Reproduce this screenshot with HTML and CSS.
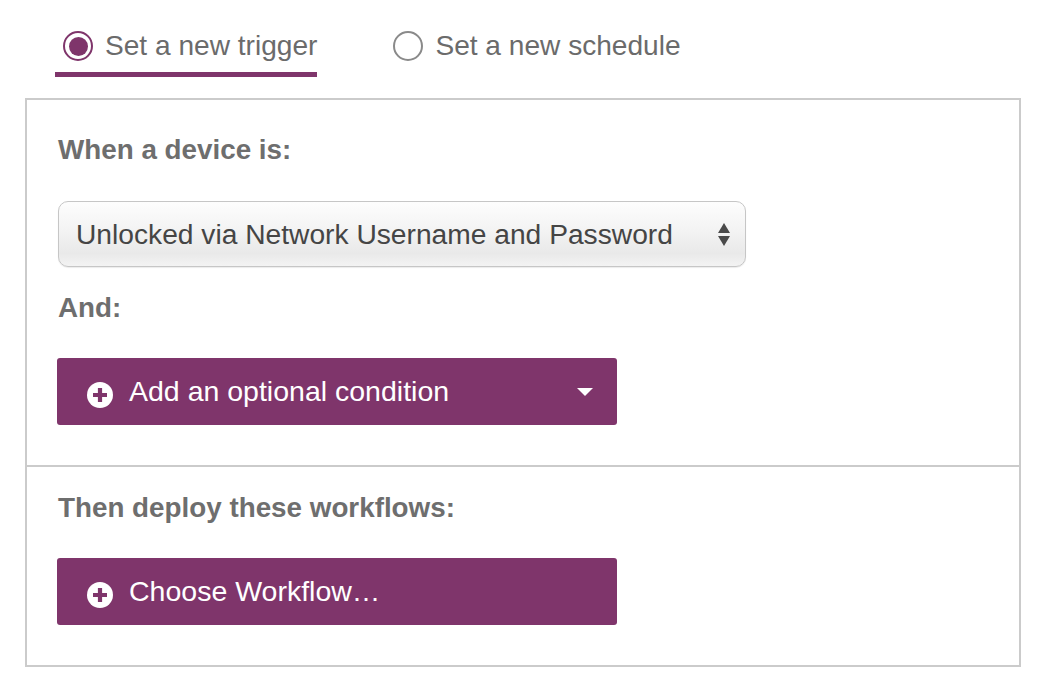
FILE: index.html
```html
<!DOCTYPE html>
<html>
<head>
<meta charset="utf-8">
<link rel="stylesheet" href="styles.css">
</head>
<body>
<div class="tabs">
  <div class="tab active">
    <span class="radio checked"><span class="dot"></span></span>
    <span class="tab-label">Set a new trigger</span>
  </div>
  <div class="tab">
    <span class="radio"></span>
    <span class="tab-label">Set a new schedule</span>
  </div>
</div>
<div class="panel">
  <div class="section first">
    <div class="heading">When a device is:</div>
    <div class="select">
      <span class="select-text">Unlocked via Network Username and Password</span>
      <span class="arrows"><span class="up"></span><span class="down"></span></span>
    </div>
    <div class="heading and">And:</div>
    <div class="btn">
      <svg class="plus" width="26" height="26" viewBox="0 0 26 26"><circle cx="13" cy="13" r="13" fill="#fff"/><path d="M13 6v14M6 13h14" stroke="#7f356b" stroke-width="4.2"/></svg>
      <span class="btn-text">Add an optional condition</span>
      <span class="caret"></span>
    </div>
  </div>
  <div class="section second">
    <div class="heading">Then deploy these workflows:</div>
    <div class="btn">
      <svg class="plus" width="26" height="26" viewBox="0 0 26 26"><circle cx="13" cy="13" r="13" fill="#fff"/><path d="M13 6v14M6 13h14" stroke="#7f356b" stroke-width="4.2"/></svg>
      <span class="btn-text">Choose Workflow…</span>
    </div>
  </div>
</div>
</body>
</html>
```
FILE: styles.css
```css
html, body {
  margin: 0;
  padding: 0;
  background: #fff;
  font-family: "Liberation Sans", Arial, sans-serif;
}
.tabs {
  display: flex;
  padding-left: 55px;
}
.tab {
  display: flex;
  align-items: center;
  padding: 30px 0 10px 8px;
  border-bottom: 5px solid transparent;
  gap: 12px;
}
.tab + .tab {
  margin-left: 68px;
}
.tab.active {
  border-bottom-color: #7f356b;
}
.tab-label {
  font-size: 28.1px;
  line-height: 32px;
  color: #6b6b6b;
}
.radio {
  box-sizing: border-box;
  width: 30px;
  height: 30px;
  border: 2px solid #8a8a8a;
  border-radius: 50%;
  display: flex;
  align-items: center;
  justify-content: center;
}
.radio.checked {
  border-color: #7f356b;
}
.dot {
  width: 19px;
  height: 19px;
  border-radius: 50%;
  background: #7f356b;
}
.panel {
  margin: 21px 0 0 25px;
  width: 996px;
  box-sizing: border-box;
  border: 2px solid #cbcbcb;
}
.section {
  padding: 34px 31px 40px 31px;
}
.section.second {
  border-top: 2px solid #cbcbcb;
  padding-top: 25px;
}
.heading {
  font-size: 27.8px;
  line-height: 32px;
  font-weight: bold;
  color: #6e6e6e;
}
.heading.and {
  margin-top: 25px;
}
.select {
  margin-top: 35px;
  width: 688px;
  height: 66px;
  box-sizing: border-box;
  border: 1px solid #c6c6c6;
  border-radius: 10px;
  background: linear-gradient(to bottom, #fdfdfd 0%, #f3f3f3 45%, #e9e9e9 80%, #f3f3f3 100%);
  box-shadow: 0 1px 1px rgba(0,0,0,0.08);
  display: flex;
  align-items: center;
  padding: 0 15px 0 17px;
}
.select-text {
  flex: 1;
  font-size: 28.2px;
  color: #454545;
}
.arrows {
  display: flex;
  flex-direction: column;
  gap: 3px;
}
.up {
  width: 0;
  height: 0;
  border-left: 6px solid transparent;
  border-right: 6px solid transparent;
  border-bottom: 10px solid #4a4a4a;
}
.down {
  width: 0;
  height: 0;
  border-left: 6px solid transparent;
  border-right: 6px solid transparent;
  border-top: 10px solid #4a4a4a;
}
.btn {
  margin-top: 34px;
  width: 560px;
  height: 67px;
  box-sizing: border-box;
  background: #7f356b;
  border-radius: 3px;
  display: flex;
  align-items: center;
  padding: 0 24px 0 30px;
  margin-left: -1px;
}
.plus {
  flex: none;
  margin-top: 6px;
}
.btn-text {
  flex: 1;
  margin-left: 16px;
  font-size: 28.5px;
  color: #fff;
}
.caret {
  width: 0;
  height: 0;
  border-left: 8px solid transparent;
  border-right: 8px solid transparent;
  border-top: 8px solid #fff;
}
```
